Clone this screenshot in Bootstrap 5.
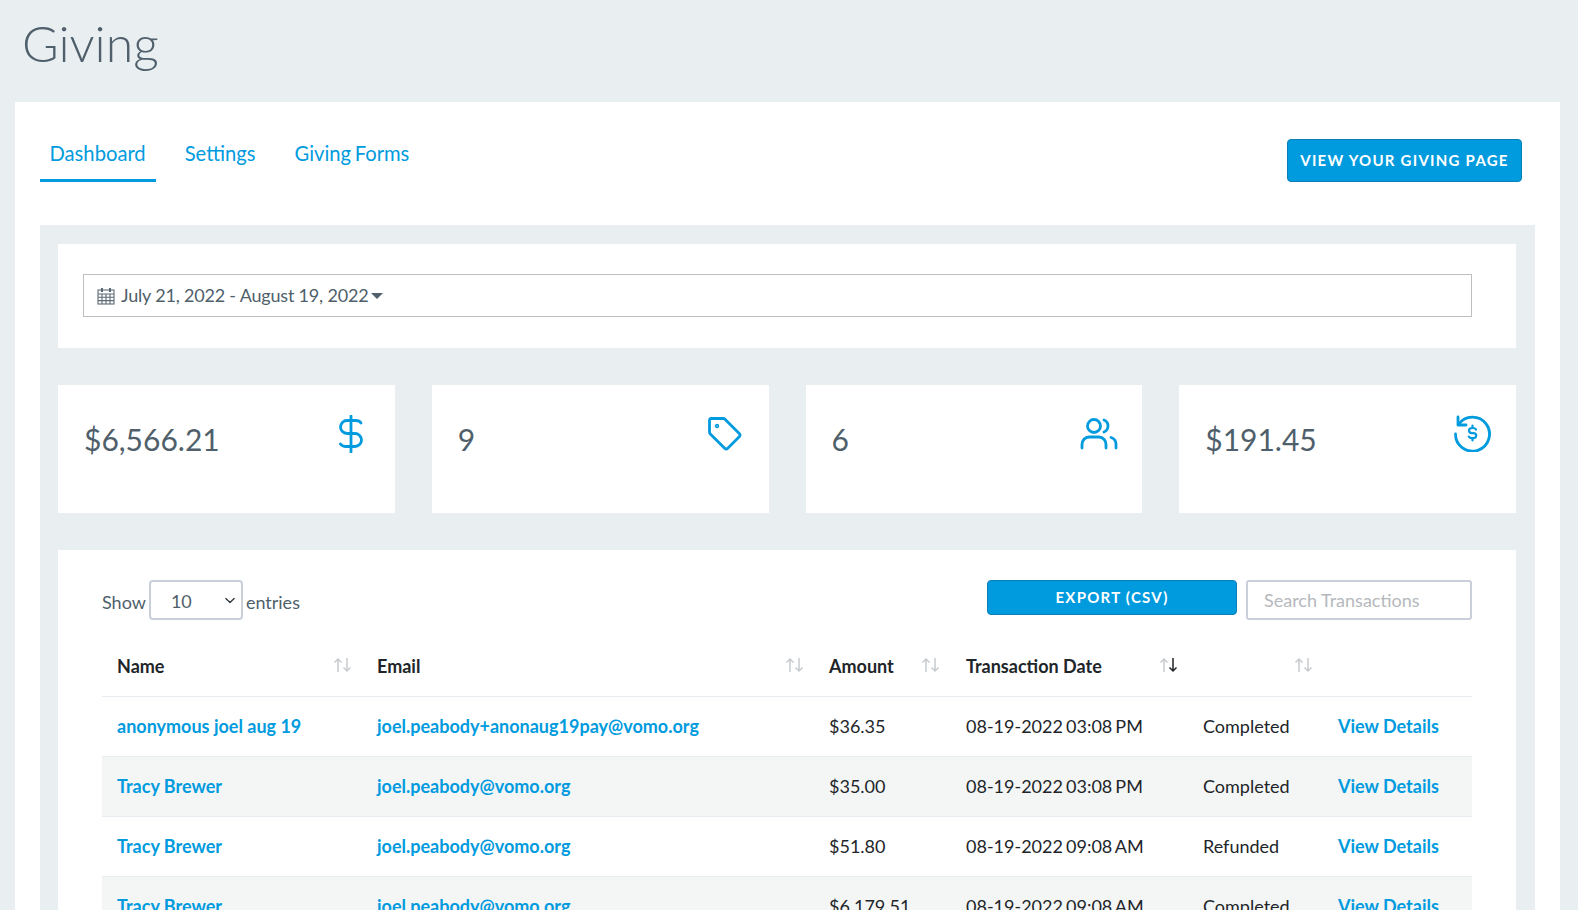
<!DOCTYPE html>
<html lang="en"><head><meta charset="utf-8"><title>Giving</title>
<link href="https://cdn.jsdelivr.net/npm/bootstrap@5.3.0/dist/css/bootstrap.min.css" rel="stylesheet">
<style>
html,body{height:100%;overflow:hidden}
body{background:#e9eef1;font-family:"Lato",sans-serif;color:#4f5f6b;font-size:18px}
.page-title{font-family:"Lato",sans-serif;font-weight:300;font-size:50px;line-height:62px;color:#4f5f6b;margin:0;padding:12px 0 28px 22px;height:102px}
.main-panel{background:#fff;margin:0 18px 0 15px;padding:25px 25px 0}
.tab-row{height:98px;padding-top:10px;padding-right:13px}
.tab-link{color:#009bde;font-size:20.2px;line-height:24px;padding:4px 10.5px 14px 9.5px;margin-right:19px;display:block;border-bottom:3px solid transparent;text-decoration:none;word-spacing:-1.5px}
.tab-link.on{border-bottom-color:#009bde}
.tab-wrap{height:45px}
.btn-sky{background:#009bde;border:1px solid #0a7fb5;color:#fff;font-weight:700;letter-spacing:1.25px;font-size:15px;border-radius:4px}
.btn-sky:hover{background:#009bde;color:#fff}
.btn-view{width:235px;height:43px;padding:0;margin-top:2px}
.btn-export{width:250px;height:35px;padding:0}
.gray-panel{background:#e9eef1;padding:19px 19px 0 18px}
.white-box{background:#fff}
.range-box{height:104px;padding:30px 44px 30px 25px;margin-bottom:37px}
.range-field{height:43px;border:1px solid #bdbfc1;display:flex;align-items:center;padding-left:13px;font-size:18px;color:#4f5f6b;letter-spacing:-.19px}
.cal-ico{margin-right:6px;flex:none}
.caret-dn{width:0;height:0;border:6px solid transparent;border-top-color:#4f5f6b;border-bottom:0;margin-left:3px}
.stat-row{display:grid;grid-template-columns:repeat(4,1fr);gap:37px;margin-bottom:37px}
.stat-box{height:128px;padding:30px 26px;display:flex;justify-content:space-between;align-items:flex-start}
.stat-num{font-size:30px;line-height:48px;color:#4f5f6b}
.stat-ico{stroke:#009bde;fill:none;stroke-width:2.8;stroke-linecap:round;stroke-linejoin:round}
.ico-dollar{margin-right:6px}
.ico-tag{margin:2px 1px 0 0}
.ico-users{margin:3px -2px 0 0}
.ico-refund{margin-right:-1px}
.table-box{padding:30px 44px 0;height:600px}
.tool-row{height:40px;margin-bottom:17px}
.sel-num{width:94px;height:40px;font-size:18px;color:#4f5f6b;border:2px solid #c9d0d9;border-radius:4px;padding:3px 0 0 20px;margin:-4px 3px 0;background-size:14px 11px;background-position:right 4px center}
.tool-right{gap:9px}
.search-field{width:226px;height:40px;font-size:18px;border:2px solid #c9d0d9;border-radius:3px;padding:0 16px}
.search-field::placeholder{color:#b5b9bd}
.tbl-giving{table-layout:fixed;width:100%;margin:0;font-size:18px;--bs-table-border-color:#e6ecef;--bs-table-color:#212529}
.tbl-giving th,.tbl-giving td{padding:0 15px;height:60px;vertical-align:middle;position:relative;color:#212529}
.tbl-giving th{font-weight:700;height:59px;border-bottom:1px solid #e6ecef}
.tbl-giving tbody tr:nth-child(even) td{background:#f4f6f6}
.tbl-giving a{color:#009bde;font-weight:700;text-decoration:none}
.date-cell{word-spacing:-1.5px}
.c1{width:260px}.c2{width:452px}.c3{width:137px}.c4{width:237px}.c5{width:135px}
.sorter{position:absolute;right:9px;top:20px;width:20px;height:16px}
.c3 .sorter{right:10px}
</style></head><body>
<h1 class="page-title">Giving</h1>
<div class="main-panel">
 <div class="d-flex justify-content-between align-items-start tab-row">
  <ul class="nav tab-wrap">
   <li class="nav-item"><a class="tab-link on" href="#">Dashboard</a></li>
   <li class="nav-item"><a class="tab-link" href="#">Settings</a></li>
   <li class="nav-item"><a class="tab-link" href="#">Giving Forms</a></li>
  </ul>
  <a href="#" class="btn btn-sky btn-view d-flex align-items-center justify-content-center">VIEW YOUR GIVING PAGE</a>
 </div>
 <div class="gray-panel">
  <div class="white-box range-box">
   <div class="range-field">
    <svg class="cal-ico" width="18" height="18" viewBox="0 0 18 18" fill="none" stroke="#5c6b76" stroke-width="1.100"><rect x="1" y="3" width="16" height="14" fill="#fff"/><path d="M1 7h16M1 10.300h16M1 13.600h16M5 7v10M9 7v10M13 7v10"/><path d="M5 1v4M13 1v4" stroke-width="2"/></svg>
    <span>July 21, 2022 - August 19, 2022</span><span class="caret-dn"></span>
   </div>
  </div>
  <div class="stat-row">
   <div class="white-box stat-box"><span class="stat-num">$6,566.21</span>
    <svg class="stat-ico ico-dollar" width="24" height="38" viewBox="0 0 24 38"><path d="M12 1v36M22 8c-1-1.500-3-2.500-5-2.500H8a6 6 0 0 0 0 13h8a6 6 0 0 1 0 13H7c-2.500 0-4.500-1-5.500-2.500"/></svg></div>
   <div class="white-box stat-box"><span class="stat-num">9</span>
    <svg class="stat-ico ico-tag" width="34" height="34" viewBox="0 0 34 34"><path d="M3 1.500h12c1 0 1.500.3 2 .8l14.500 14.500a2 2 0 0 1 0 2.600L19.500 31.500a2 2 0 0 1-2.600 0L2.300 17c-.6-.6-.8-1-.8-2V3a1.500 1.500 0 0 1 1.500-1.500z"/><circle cx="9" cy="9" r=".8"/></svg></div>
   <div class="white-box stat-box"><span class="stat-num">6</span>
    <svg class="stat-ico ico-users" width="38" height="32" viewBox="0 0 38 32"><circle cx="14" cy="8" r="6.500"/><path d="M24 2a6.500 6.500 0 0 1 0 12M2 30v-3.500c0-4 3-7.500 7-7.500h10c4 0 7 3.500 7 7.500V30M31 19.500c3 1 5 3.500 5 6.500v4"/></svg></div>
   <div class="white-box stat-box"><span class="stat-num">$191.45</span>
    <svg class="stat-ico ico-refund" width="37" height="37" viewBox="0 0 37 37"><path d="M4.500 9.500A17 17 0 1 1 1.500 19"/><path d="M4 2v8h8"/><path d="M22 14.500c-.6-1-1.500-1.500-3-1.500h-1c-1.700 0-3 1-3 2.600s1.300 2.500 3 2.500h1.200c1.700 0 3 .9 3 2.500s-1.300 2.600-3 2.600H18c-1.500 0-2.600-.6-3.200-1.600M18.500 10.500V13M18.500 23.200v2.300" stroke-width="2.200"/></svg></div>
  </div>
  <div class="white-box table-box">
   <div class="d-flex justify-content-between tool-row">
    <div class="d-flex align-items-center pt-1">Show<select class="form-select sel-num" aria-label="entries"><option>10</option></select>entries</div>
    <div class="d-flex tool-right align-items-start">
     <a href="#" class="btn btn-sky btn-export d-flex align-items-center justify-content-center">EXPORT (CSV)</a>
     <input class="form-control search-field" placeholder="Search Transactions">
    </div>
   </div>
   <table class="table tbl-giving">
    <thead><tr>
     <th class="c1">Name<svg class="sorter" viewBox="0 0 20 16" fill="none" stroke="#c8cbce" stroke-width="1.500"><use href="#arw"/></svg></th>
     <th class="c2">Email<svg class="sorter" viewBox="0 0 20 16" fill="none" stroke="#c8cbce" stroke-width="1.500"><use href="#arw"/></svg></th>
     <th class="c3">Amount<svg class="sorter" viewBox="0 0 20 16" fill="none" stroke="#c8cbce" stroke-width="1.500"><use href="#arw"/></svg></th>
     <th class="c4">Transaction Date<svg class="sorter" viewBox="0 0 20 16" fill="none" stroke-width="1.500"><path d="M5 15V2M1.500 5.500 5 2l3.500 3.500" stroke="#c8cbce"/><path d="M14 1v13M10.500 10.500 14 14l3.500-3.500" stroke="#212529"/></svg></th>
     <th class="c5"><svg class="sorter" viewBox="0 0 20 16" fill="none" stroke="#c8cbce" stroke-width="1.500"><use href="#arw"/></svg></th>
     <th></th>
    </tr></thead>
    <tbody>
     <tr><td><a href="#">anonymous joel aug 19</a></td><td><a href="#">joel.peabody+anonaug19pay@vomo.org</a></td><td>$36.35</td><td class="date-cell">08-19-2022 03:08 PM</td><td>Completed</td><td><a href="#">View Details</a></td></tr>
     <tr><td><a href="#">Tracy Brewer</a></td><td><a href="#">joel.peabody@vomo.org</a></td><td>$35.00</td><td class="date-cell">08-19-2022 03:08 PM</td><td>Completed</td><td><a href="#">View Details</a></td></tr>
     <tr><td><a href="#">Tracy Brewer</a></td><td><a href="#">joel.peabody@vomo.org</a></td><td>$51.80</td><td class="date-cell">08-19-2022 09:08 AM</td><td>Refunded</td><td><a href="#">View Details</a></td></tr>
     <tr><td><a href="#">Tracy Brewer</a></td><td><a href="#">joel.peabody@vomo.org</a></td><td>$6,179.51</td><td class="date-cell">08-19-2022 09:08 AM</td><td>Completed</td><td><a href="#">View Details</a></td></tr>
    </tbody>
   </table>
  </div>
 </div>
</div>
<svg width="0" height="0" class="d-none"><defs><g id="arw"><path d="M5 15V2M1.500 5.500 5 2l3.500 3.500"/><path d="M14 1v13M10.500 10.500 14 14l3.500-3.500"/></g></defs></svg>
<script src="https://cdn.jsdelivr.net/npm/bootstrap@5.3.0/dist/js/bootstrap.bundle.min.js"></script>
</body></html>
